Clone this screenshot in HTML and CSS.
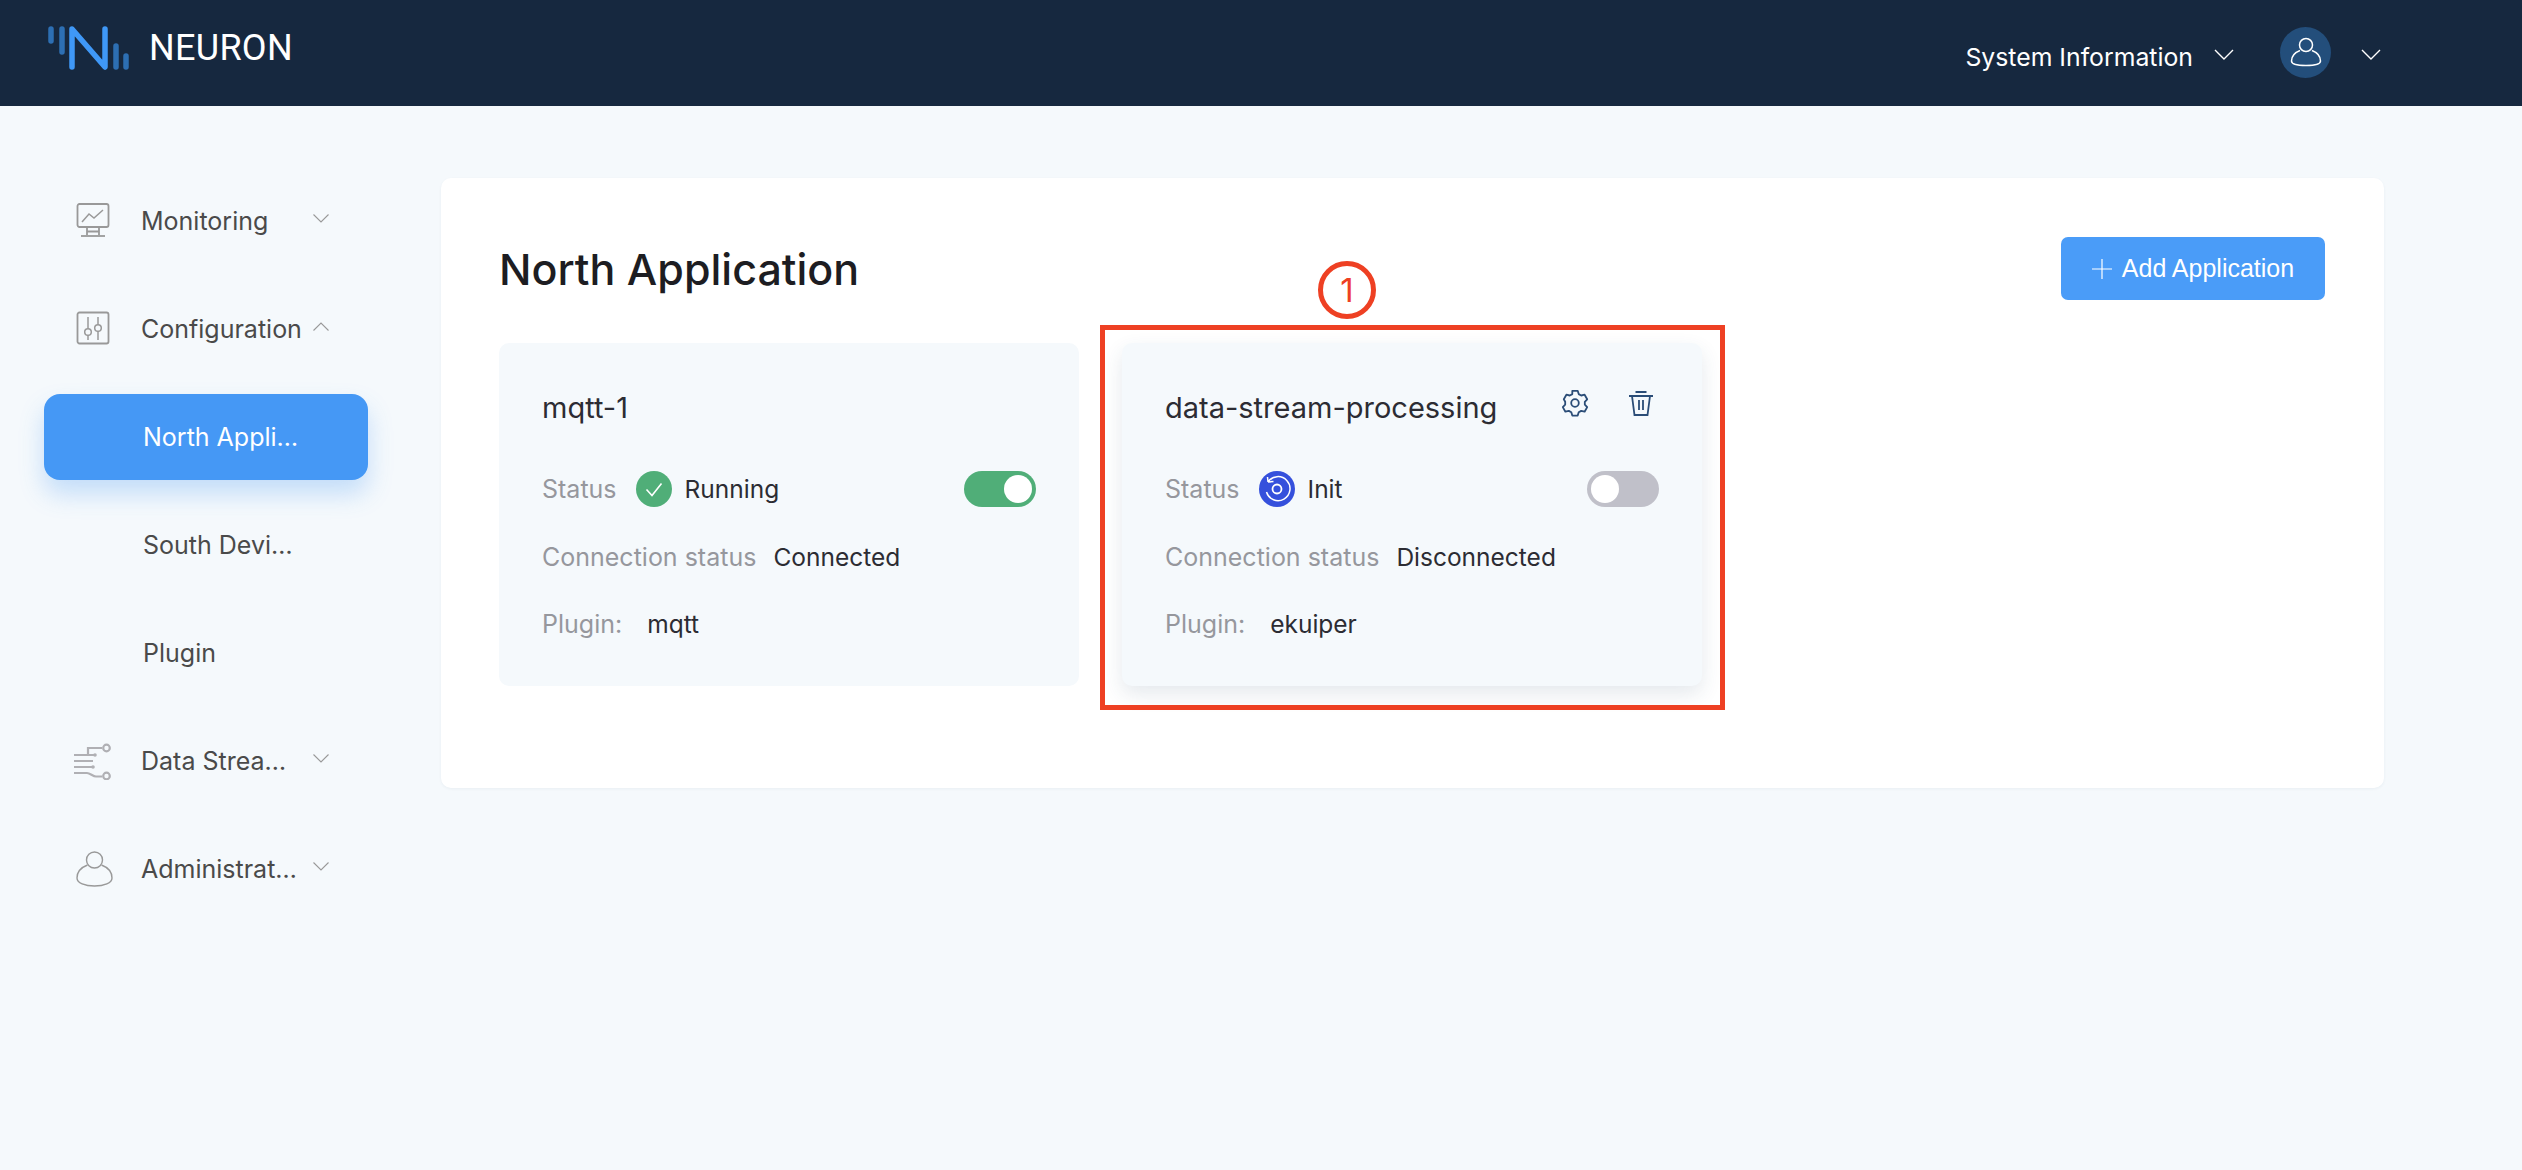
FILE: index.html
```html
<!DOCTYPE html>
<html lang="en">
<head>
<meta charset="utf-8">
<title>Neuron</title>
<link rel="stylesheet" href="styles.css">
</head>
<body>
<header class="topbar">
  <div class="brand">
    <svg class="logo" width="82" height="44" viewBox="0 0 82 44" fill="none" stroke-linecap="round">
      <path d="M3 3v12M14 3v23M68 20v21M78 30v11" stroke="#2d6fb3" stroke-width="5.5"/>
      <path d="M24 41V3l33 38V3" stroke="#3f98f7" stroke-width="5.5" stroke-linejoin="round"/>
    </svg>
    <span class="brand-name">NEURON</span>
  </div>
  <div class="top-actions">
    <span class="sys-info">System Information</span>
    <svg class="chev-top" width="20" height="11" viewBox="0 0 20 11" fill="none"><path d="M1 1l9 9 9-9" stroke="#fff" stroke-width="1.4"/></svg>
    <span class="avatar">
      <svg width="32" height="32" viewBox="0 0 32 32" fill="none" stroke="#fff" stroke-width="1.5"><circle cx="16" cy="9" r="6.5"/><path d="M10 14.5C5 16.5 1.5 20.5 1.5 25c0 3 5 4.500 14.500 4.500s14.500-1.500 14.500-4.500c0-4.500-3.500-8.500-8.500-10.500"/></svg>
    </span>
    <svg class="chev-top" width="20" height="11" viewBox="0 0 20 11" fill="none"><path d="M1 1l9 9 9-9" stroke="#fff" stroke-width="1.4"/></svg>
  </div>
</header>

<div class="layout">
  <nav class="sidebar">
    <a class="nav-item">
      <svg class="nav-icon" width="37" height="37" viewBox="0 0 37 37" fill="none" stroke="#999" stroke-width="1.8"><rect x="1.500" y="1" width="31" height="23" rx="2"/><path d="M6 19l7-8 5 4 9-8" stroke-width="1.500"/><path d="M11 24v8M23 24v8M11 28.500h12" /><path d="M5 33h24"/></svg>
      <span class="nav-label">Monitoring</span>
      <svg class="chev" width="16" height="9" viewBox="0 0 16 9" fill="none"><path d="M.5.5L8 8 15.500.5" stroke="#999" stroke-width="1.100"/></svg>
    </a>
    <a class="nav-item">
      <svg class="nav-icon" width="37" height="37" viewBox="0 0 37 37" fill="none" stroke="#999" stroke-width="1.800"><rect x="1.500" y="1.500" width="31" height="31" rx="2"/><path d="M12 6v12M12 24v5M22 6v8M22 20v9" stroke-width="1.500"/><circle cx="12" cy="21" r="3.300" stroke-width="1.500"/><circle cx="22" cy="17" r="3.300" stroke-width="1.500"/></svg>
      <span class="nav-label">Configuration</span>
      <svg class="chev" width="16" height="9" viewBox="0 0 16 9" fill="none"><path d="M.5 8.500L8 1l7.500 7.500" stroke="#999" stroke-width="1.100"/></svg>
    </a>
    <a class="nav-item nav-sub active"><span class="nav-label">North Application</span></a>
    <a class="nav-item nav-sub"><span class="nav-label">South Devices</span></a>
    <a class="nav-item nav-sub"><span class="nav-label">Plugin</span></a>
    <a class="nav-item">
      <svg class="nav-icon wide" width="37" height="37" viewBox="0 0 37 37" fill="none" stroke="#b0b0b4" stroke-width="2.200"><path d="M0 12h15M0 18h19M0 24h18M0 30h13c3 0 6 3.500 9 3.500h6"/><path d="M14 12V5h14M14 12h7"/><circle cx="32.500" cy="5" r="3.300"/><circle cx="32.500" cy="33" r="3.300"/><circle cx="21" cy="12" r="1.800" fill="#b0b0b4" stroke="none"/><circle cx="19" cy="24" r="1.800" fill="#b0b0b4" stroke="none"/></svg>
      <span class="nav-label">Data Stream Processing</span>
      <svg class="chev" width="16" height="9" viewBox="0 0 16 9" fill="none"><path d="M.5.5L8 8 15.500.5" stroke="#999" stroke-width="1.100"/></svg>
    </a>
    <a class="nav-item">
      <svg class="nav-icon" width="37" height="37" viewBox="0 0 37 37" fill="none" stroke="#999" stroke-width="1.400"><circle cx="18.500" cy="9" r="8"/><path d="M11.500 14C5 16.500 1 21.500 1 27c0 5 8 8 17.500 8S36 32 36 27c0-5.500-4-10.500-10.500-13"/></svg>
      <span class="nav-label nav-label-short">Administration</span>
      <svg class="chev" width="16" height="9" viewBox="0 0 16 9" fill="none"><path d="M.5.5L8 8 15.500.5" stroke="#999" stroke-width="1.100"/></svg>
    </a>
  </nav>

  <main class="panel">
    <div class="panel-head">
      <h1 class="panel-title">North Application</h1>
      <button class="add-btn">
        <svg width="20" height="20" viewBox="0 0 20 20" fill="none"><path d="M10 0v20M0 10h20" stroke="#fff" stroke-width="1.200"/></svg>
        Add Application
      </button>
    </div>
    <div class="cards">
      <section class="card">
        <div class="card-title"><span>mqtt-1</span></div>
        <div class="card-row status-row">
          <span class="key">Status</span>
          <svg class="status-icon" width="36" height="36" viewBox="0 0 36 36"><circle cx="18" cy="18" r="18" fill="#50ae78"/><path d="M10.500 18.500l5.500 6 9.500-12" fill="none" stroke="#fff" stroke-width="1.600"/></svg>
          <span class="val">Running</span>
          <span class="switch on"><span class="knob"></span></span>
        </div>
        <div class="card-row"><span class="key">Connection status</span><span class="val">Connected</span></div>
        <div class="card-row plugin"><span class="key">Plugin:</span><span class="val">mqtt</span></div>
      </section>
      <section class="card hovered">
        <div class="card-title">
          <span>data-stream-processing</span>
          <span class="card-tools">
            <svg width="28" height="28" viewBox="0 0 28 28" fill="none" stroke="#2b4d77" stroke-width="1.800" stroke-linejoin="round"><path d="M11.300 1.800h5.400l1 3.300 2.500 1.400 3.400-.8 2.600 4.600-2.400 2.500v2.800l2.400 2.500-2.600 4.600-3.400-.8-2.500 1.400-1 3.300h-5.400l-1-3.300-2.500-1.400-3.400.8-2.600-4.600 2.400-2.500v-2.800L2.800 10.300l2.600-4.600 3.400.8 2.500-1.400z"/><circle cx="14" cy="14" r="3.800"/></svg>
            <svg width="24" height="25" viewBox="0 0 24 25" fill="none" stroke="#2b4d77" stroke-width="1.800"><path d="M0 5h24M6.500 1h11M3 5l2.500 19h13L21 5M10 9v10M14 9v10"/></svg>
          </span>
        </div>
        <div class="card-row status-row">
          <span class="key">Status</span>
          <svg class="status-icon" width="36" height="36" viewBox="0 0 36 36"><circle cx="18" cy="18" r="18" fill="#3550dc"/><circle cx="18" cy="18" r="4.500" fill="none" stroke="#fff" stroke-width="1.800"/><path d="M9 11a12 12 0 1 1-1.500 10M9 11l-.5-5M9 11l5.500 -.5" fill="none" stroke="#fff" stroke-width="1.500"/></svg>
          <span class="val">Init</span>
          <span class="switch"><span class="knob"></span></span>
        </div>
        <div class="card-row"><span class="key">Connection status</span><span class="val">Disconnected</span></div>
        <div class="card-row plugin"><span class="key">Plugin:</span><span class="val">ekuiper</span></div>
      </section>
    </div>
  </main>
</div>

<div class="callout-box"></div>
<div class="callout-num">1</div>
</body>
</html>
```
FILE: styles.css
```css
* { box-sizing: border-box; }
html, body { margin: 0; height: 100%; }
body {
  background: #f5f9fc;
  font-family: Inter, "Noto Sans", sans-serif;
  color: #2c2c33;
  position: relative;
  min-height: 1170px;
  overflow: hidden;
}
.topbar {
  height: 106px;
  background: #16283f;
  display: flex;
  align-items: flex-start;
  justify-content: space-between;
  padding: 0 141px 0 48px;
  color: #fff;
}
.brand { display: flex; align-items: center; height: 94px; }
.logo { margin-right: 19px; margin-top: 1px; }
.brand-name { font-family: Roboto, sans-serif; font-size: 36px; letter-spacing: .3px; position: relative; top: 1px; }
.top-actions { display: flex; align-items: center; height: 104px; }
.sys-info { font-size: 24.8px; font-weight: 400; margin-top: 9px; }
.chev-top { margin-left: 21px; margin-top: 5px; }
.avatar {
  width: 51px; height: 51px; border-radius: 50%;
  background: #234e7b;
  display: flex; align-items: center; justify-content: center;
  margin-left: 46px;
  margin-right: 9px;
}
.layout { display: flex; padding: 72px 138px 0 44px; gap: 73px; align-items: flex-start; }
.sidebar { width: 324px; flex: none; display: flex; flex-direction: column; gap: 22px; }
.nav-item {
  height: 86px;
  display: flex; align-items: center;
  padding-left: 30px;
  border-radius: 16px;
  color: #4a4a4a;
  font-size: 25px;
  position: relative;
}
.nav-icon { flex: none; margin-left: 2px; margin-right: 28px; }
.nav-icon.wide { margin-left: 0; margin-right: 30px; }
.nav-label { display: block; width: 163px; white-space: nowrap; overflow: hidden; text-overflow: ellipsis; }
.nav-label-short { width: 158px; margin-right: 5px; }
.nav-sub { padding-left: 99px; }
.chev { flex: none; margin-left: 9px; margin-top: -6px; }
.active {
  background: #4598f5;
  color: #fff;
  box-shadow: 0 14px 24px rgba(69,152,245,.28);
}
.panel {
  flex: 1;
  background: #fff;
  border-radius: 10px;
  padding: 59px 59px 102px 58px;
  box-shadow: 0 1px 3px rgba(30,60,100,.06);
}
.panel-head { display: flex; justify-content: space-between; align-items: center; height: 63px; margin-bottom: 43px; }
.panel-title { margin: 0; font-size: 43px; font-weight: 500; color: #1d1d22; }
.add-btn {
  width: 264px; height: 63px;
  border: 0; border-radius: 7px;
  background: #4a9cf8;
  color: #fff;
  font-family: "Liberation Sans", Arial, sans-serif;
  font-size: 25px;
  display: flex; align-items: center; justify-content: center; gap: 10px;
}
.cards { display: grid; grid-template-columns: repeat(3, 580px); gap: 43px; }
.card {
  height: 343px;
  background: #f5f9fc;
  border-radius: 10px;
  padding: 44px 43px 43px;
  display: flex; flex-direction: column; gap: 31px;
}
.card.hovered { box-shadow: 0 8px 20px rgba(40,70,110,.12); }
.card-title {
  display: flex; justify-content: space-between; align-items: center;
  height: 40px; margin-bottom: 13px;
  font-size: 29px; color: #2c2c33;
}
.card-tools { display: flex; align-items: center; gap: 40px; margin-right: 6px; margin-top: -8px; }
.card-row { display: flex; align-items: center; height: 36px; font-size: 25px; gap: 17px; }
.status-row { margin-bottom: 1px; }
.key { color: #96979d; }
.val { color: #2c2c33; font-size: 24.5px; }
.status-icon { flex: none; margin-left: 2px; margin-right: -4px; }
.plugin { gap: 25px; }
.switch {
  margin-left: auto;
  width: 72px; height: 36px;
  border-radius: 18px;
  background: #c0c0c9;
  padding: 4px;
  display: flex;
}
.switch.on { background: #50ae78; justify-content: flex-end; }
.knob { width: 28px; height: 28px; border-radius: 50%; background: #fff; }
.callout-box {
  position: absolute;
  left: 1100px; top: 325px;
  width: 625px; height: 385px;
  border: 5px solid #ee4023;
}
.callout-num {
  position: absolute;
  left: 1318px; top: 261px;
  width: 58px; height: 58px;
  border: 5px solid #ee4023;
  border-radius: 50%;
  color: #ee4023;
  font-size: 33px;
  display: flex; align-items: center; justify-content: center;
  background: #fff;
}
```
